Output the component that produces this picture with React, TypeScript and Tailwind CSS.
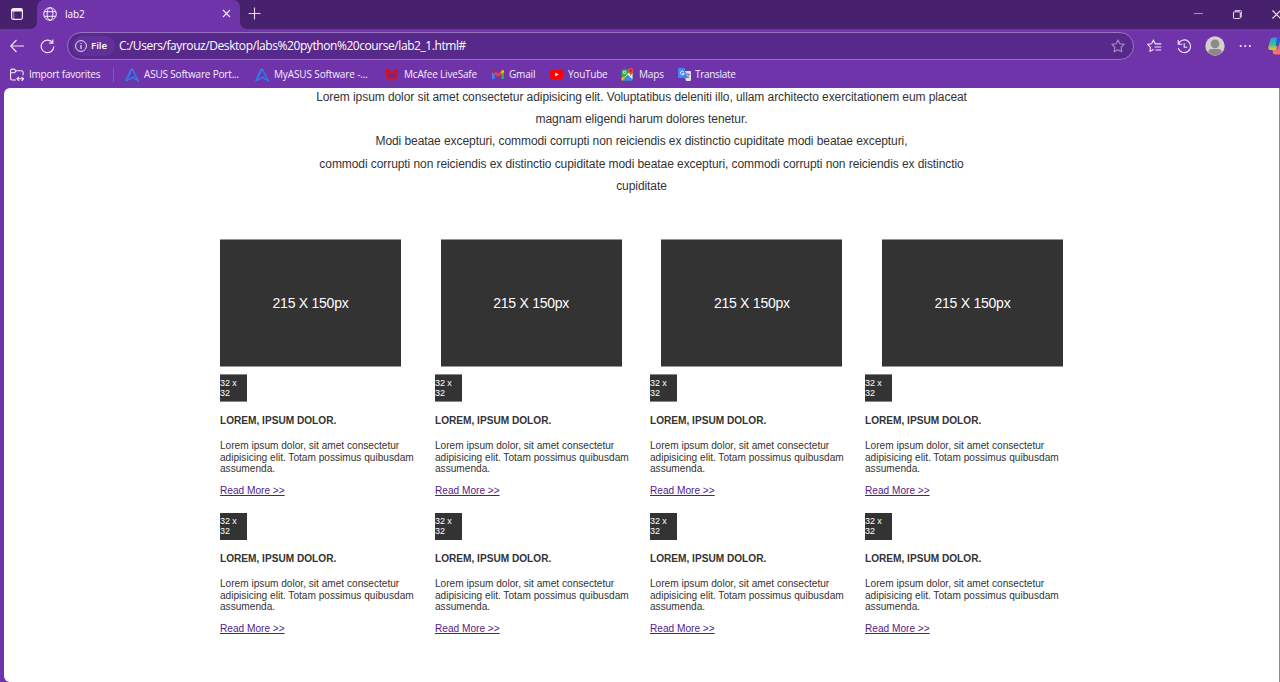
import type { ReactNode } from "react";

const intro = [
  "Lorem ipsum dolor sit amet consectetur adipisicing elit. Voluptatibus deleniti illo, ullam architecto exercitationem eum placeat",
  "magnam eligendi harum dolores tenetur.",
  "Modi beatae excepturi, commodi corrupti non reiciendis ex distinctio cupiditate modi beatae excepturi,",
  "commodi corrupti non reiciendis ex distinctio cupiditate modi beatae excepturi, commodi corrupti non reiciendis ex distinctio",
  "cupiditate",
];

function AsusIcon() {
  return (
    <svg className="h-[14px] w-[14px] shrink-0" viewBox="0 0 14 14" fill="none" stroke="#2b80ee" strokeWidth="1.5">
      <path d="M.6 12.900 6.300 1.200h1.200L13.200 12.900 8.800 10.200M6.900 1.200 3 9.600M.6 12.900 9.300 8.600" strokeWidth="1.300" />
    </svg>
  );
}

function McAfeeIcon() {
  return (
    <svg className="h-[13px] w-[12px] shrink-0" viewBox="0 0 12 13">
      <path d="M0 0l6 3 6-3v10l-6 3-6-3z" fill="#c5162e" />
      <path d="M3 4.200 6 5.800l3-1.600v4.300L6 10 3 8.500z" fill="#6b2797" />
    </svg>
  );
}

function GmailIcon() {
  return (
    <svg className="h-[9px] w-[12px] shrink-0" viewBox="0 0 12 9">
      <path d="M0 2h2.700v7H.8A.8.8 0 0 1 0 8.200z" fill="#4285f4" />
      <path d="M9.300 2H12v6.200a.8.8 0 0 1-.8.8H9.300z" fill="#34a853" />
      <path d="M2.700 1 6 3.400 9.300 1v3.300L6 6.800 2.700 4.300z" fill="#ea4335" />
      <path d="M0 2V1.200C0 0 1.300-.3 2.100.5l.6.5v3.300L0 2.200z" fill="#c5221f" />
      <path d="M12 2V1.200C12 0 10.700-.3 9.900.5l-.6.5v3.300L12 2.200z" fill="#fbbc04" />
    </svg>
  );
}

function YouTubeIcon() {
  return (
    <svg className="h-[9px] w-[13px] shrink-0" viewBox="0 0 13 9">
      <rect width="13" height="9" rx="2" fill="#f00" />
      <path d="m5.200 2.600 3.500 1.900-3.500 1.900z" fill="#fff" />
    </svg>
  );
}

function MapsIcon() {
  return (
    <svg className="h-[13px] w-[13px] shrink-0" viewBox="0 0 13 13">
      <rect x=".5" y="1.500" width="11" height="11" rx="1" fill="#34a853" />
      <path d="M.7 11.800 9.500 3l2 2v6.500L7 7z" fill="#e8eaed" />
      <path d="m2 12.500 5-5 4.500 4.600-.4.4z" fill="#4285f4" />
      <path d="m.5 10.500 2-2 1.500 1.600-2.400 2.400H.5z" fill="#fbbc04" />
      <circle cx="3.500" cy="4.300" r="1.300" fill="none" stroke="#fff" strokeWidth=".8" />
      <path d="M9.800 0a2.700 2.700 0 0 1 2.700 2.700c0 1.800-2.100 2.600-2.700 5.300C9.200 5.300 7.100 4.500 7.100 2.700A2.700 2.700 0 0 1 9.800 0z" fill="#ea4335" />
      <circle cx="9.800" cy="2.700" r=".9" fill="#811411" />
    </svg>
  );
}

function TranslateIcon() {
  return (
    <svg className="h-[13px] w-[13px] shrink-0" viewBox="0 0 13 13">
      <path d="M5 3h7a1 1 0 0 1 1 1v8a1 1 0 0 1-1 1H8z" fill="#dfe1e5" />
      <path d="M7.800 6.200h4M9.800 5.200v1M11.300 6.200c-.4 2-1.500 3-2.700 4M8.600 7.500c.6 1 1.500 2 2.500 2.500" fill="none" stroke="#5f6b7c" strokeWidth=".8" />
      <path d="M1 0h5.500l3 10H1a1 1 0 0 1-1-1V1a1 1 0 0 1 1-1z" fill="#4285f4" />
      <path d="M5.900 3.900A1.900 1.900 0 1 0 6.200 5.300H4.400" fill="none" stroke="#fff" strokeWidth=".9" />
    </svg>
  );
}

function Bookmark({ slot, icon, look, children }: { slot: string; icon: ReactNode; look: string; children: string }) {
  return (
    <a className={`flex shrink-0 items-center ${slot}`}>
      {icon}
      <span className={`whitespace-nowrap ${look}`}>{children}</span>
    </a>
  );
}

function TabStrip() {
  return (
    <div className="flex h-[29px] bg-[#47216e]">
      <div className="flex w-[37px] shrink-0 items-center bg-[#6f34aa]">
        <div className="flex h-full w-full items-center rounded-br-[7px] bg-[#47216e] pl-[11px]">
          <svg className="mb-[1px] h-[12px] w-[12px]" viewBox="0 0 12 12" fill="none" stroke="#f3edf8">
            <rect x=".6" y=".6" width="10.800" height="10.800" rx="1.800" strokeWidth="1.200" />
            <path d="M1 2.200h10" strokeWidth="2.600" />
            <path d="M2.800 3v8" strokeWidth="1" opacity=".55" />
          </svg>
        </div>
      </div>
      <div className="shrink-0 bg-[#47216e]">
        <div className="flex h-[29px] w-[203px] items-center rounded-t-[7px] bg-[#6f34aa] pb-[2px] pl-[6px] pr-[9px]">
          <svg className="h-[14px] w-[14px]" viewBox="0 0 14 14" fill="none" stroke="#f6f0fa">
            <circle cx="7" cy="7" r="6.300" />
            <ellipse cx="7" cy="7" rx="2.900" ry="6.300" />
            <path d="M1.200 4.700h11.600M1.200 9.300h11.600" />
          </svg>
          <span className="ml-[8px] text-[10px] leading-none tracking-[-0.100px] text-white">lab2</span>
          <svg className="ml-auto h-[9px] w-[9px]" viewBox="0 0 9 9" stroke="#f3edf8" strokeWidth="1.100">
            <path d="m1 1 7 7M8 1 1 8" />
          </svg>
        </div>
      </div>
      <div className="min-w-0 flex-1 overflow-hidden bg-[#6f34aa]">
        <div className="flex h-full items-center rounded-bl-[7px] bg-[#47216e] pl-[8px]">
          <svg className="mb-[2px] h-[13px] w-[13px] shrink-0" viewBox="0 0 13 13" stroke="#e7dcef" strokeWidth="1.100">
            <path d="M6.500.5v12M.5 6.500h12" />
          </svg>
          <svg className="ml-[933px] h-[9px] w-[9px] shrink-0" viewBox="0 0 9 9" stroke="#a98fc1">
            <path d="M0 3.500h9" />
          </svg>
          <svg className="ml-[30px] h-[9px] w-[9px] shrink-0" viewBox="0 0 9 9" fill="none" stroke="#eee4f5">
            <rect x=".5" y="1.800" width="6.800" height="6.800" rx=".8" />
            <path d="M2.200 1.500V.5h5.300a1 1 0 0 1 1 1v5.300h-1" strokeWidth=".8" />
          </svg>
          <svg className="ml-[30px] h-[9px] w-[9px] shrink-0" viewBox="0 0 9 9" stroke="#eee4f5" strokeWidth="1.100">
            <path d="m.5.5 8 8M8.500.5l-8 8" />
          </svg>
        </div>
      </div>
    </div>
  );
}

function Toolbar() {
  return (
    <div className="flex h-[35px] items-center overflow-hidden pb-[1px]">
      <svg className="ml-[10px] h-[14px] w-[14px] shrink-0" viewBox="0 0 14 14" fill="none" stroke="#f1e8f8" strokeWidth="1.100">
        <path d="M6.500 1 .7 7l5.800 6M.8 7H14" />
      </svg>
      <svg className="ml-[16px] h-[15px] w-[15px] shrink-0" viewBox="0 0 15 15" fill="none" stroke="#f1e8f8" strokeWidth="1.200">
        <path d="M13.800 7.500A6.300 6.300 0 1 1 12.200 3.200M12.800.5v3.700H9" />
      </svg>
      <div className="ml-[12px] flex h-[28px] w-[1067px] shrink-0 items-center rounded-full border border-[#9a73c2] bg-[#57298a] pr-[8px]">
        <div className="ml-[4px] flex h-[20px] w-[43px] items-center rounded-full bg-[#613098] pl-[3px]">
          <svg className="h-[12px] w-[12px] shrink-0" viewBox="0 0 12 12" fill="none" stroke="#e9def2">
            <circle cx="6" cy="6" r="5.400" />
            <path d="M6 5v4M6 2.900v1.200" strokeWidth="1.200" />
          </svg>
          <span className="ml-[4px] text-[9.700px] font-semibold text-white">File</span>
        </div>
        <span className="ml-[4px] whitespace-nowrap text-[12px] tracking-[-0.430px] text-white">C:/Users/fayrouz/Desktop/labs%20python%20course/lab2_1.html#</span>
        <svg className="ml-auto h-[14px] w-[14px] shrink-0" viewBox="0 0 14 14" fill="none" stroke="#ad8bcb" strokeWidth="1.100" strokeLinejoin="round">
          <path d="m7 .9 1.900 3.900 4.200.6-3 3 .7 4.300L7 10.700l-3.800 2 .7-4.300-3-3 4.200-.6z" />
        </svg>
      </div>
      <svg className="ml-[13px] h-[14px] w-[15px] shrink-0" viewBox="0 0 15 14" fill="none" stroke="#f0e5f8" strokeWidth="1.100" strokeLinejoin="round" strokeLinecap="round">
        <path d="M8.300 4.900 6.400.9 4.600 4.800.6 5.400l2.900 2.900-.7 4.200 3.600-1.900M8.500 4.900h5.300M8 8h5.800M9 11h4.800" />
      </svg>
      <svg className="ml-[15px] h-[15px] w-[15px] shrink-0" viewBox="0 0 15 15" fill="none" stroke="#f0e5f8" strokeWidth="1.100">
        <path d="M1.300 5.200A6.300 6.300 0 1 1 1.200 9M1.200 1v4.200h4.200M7.200 4.200v4.100h3" />
      </svg>
      <svg className="ml-[13px] h-[20px] w-[20px] shrink-0" viewBox="0 0 20 20">
        <circle cx="10" cy="10" r="9.700" fill="#d2d0ce" />
        <circle cx="10" cy="7.800" r="4.400" fill="#8c8987" />
        <path d="M3.300 16.400c.2-2.400 1.400-3.300 3-3.300h7.400c1.600 0 2.800.9 3 3.300a9.500 9.500 0 0 1-13.400 0z" fill="#8c8987" />
      </svg>
      <svg className="ml-[14px] h-[4px] w-[13px] shrink-0" viewBox="0 0 13 4" fill="#f5edfa">
        <circle cx="1.700" cy="2" r="1.100" />
        <circle cx="6.300" cy="2" r="1.100" />
        <circle cx="10.900" cy="2" r="1.100" />
      </svg>
      <svg className="ml-[16px] h-[18px] w-[18px] shrink-0" viewBox="0 0 18 18">
        <defs>
          <linearGradient id="pilotLeft" x1="0" y1="0" x2="0" y2="1">
            <stop offset="0" stopColor="#209be8" />
            <stop offset=".55" stopColor="#43bd91" />
            <stop offset="1" stopColor="#e7c62f" />
          </linearGradient>
          <linearGradient id="pilotRight" x1="0" y1="1" x2="1" y2="0">
            <stop offset="0" stopColor="#f8823f" />
            <stop offset=".5" stopColor="#f2609e" />
            <stop offset="1" stopColor="#a95ce8" />
          </linearGradient>
        </defs>
        <path d="M5 .5h7c1.400 0 1.700 1 2 2l.5 2H11L8.300 13H2.500C.5 13 0 11.400.4 9.700L2.300 2.900C2.700 1.500 3.500.5 5 .5z" fill="url(#pilotLeft)" />
        <path d="M8.800.5h3.300c1.300 0 1.600 1 1.900 2l.6 2h-3.500L9.500 9H7.800z" fill="#2459ce" />
        <path d="M11.700 5h3.800c2 0 2.500 1.600 2.100 3.300l-2 7c-.4 1.500-1 2.300-2.500 2.300H7c-1.400 0-1.700-.9-2-2L4.500 13h3.700c.8 0 1.200-.5 1.500-1.500z" fill="url(#pilotRight)" />
      </svg>
    </div>
  );
}

function BookmarksBar() {
  return (
    <div className="flex h-[24px] items-center pb-[3px] pl-[10px] text-[10px] text-[#f5edfb]">
      <Bookmark slot="w-[103px]" look="ml-[5px] tracking-[-0.230px]" icon={
        <svg className="h-[14px] w-[14px] shrink-0" viewBox="0 0 14 14" fill="none" stroke="#f3eaf9" strokeWidth="1.100">
          <path d="M6 12H2A1.400 1.400 0 0 1 .6 10.600V2.500A1.400 1.400 0 0 1 2 1.100h2.300l1.700 1.700h5.700a1.400 1.400 0 0 1 1.400 1.400v3M.6 4.700h4L6 2.800M7 10.800h6.500M9 8.800l-2 2 2 2M11.600 8.800l2 2-2 2" />
        </svg>
      }>Import favorites</Bookmark>
      <div className="mr-[11px] h-[14px] w-px bg-[#8757b5]" />
      <Bookmark slot="w-[130px]" look="ml-[5px] tracking-[-0.180px]" icon={<AsusIcon />}>ASUS Software Port...</Bookmark>
      <Bookmark slot="w-[131px]" look="ml-[5px] tracking-[-0.130px]" icon={<AsusIcon />}>MyASUS Software -...</Bookmark>
      <Bookmark slot="w-[106px]" look="ml-[6px] tracking-[-0.180px]" icon={<McAfeeIcon />}>McAfee LiveSafe</Bookmark>
      <Bookmark slot="w-[58px]" look="ml-[5px] tracking-[-0.180px]" icon={<GmailIcon />}>Gmail</Bookmark>
      <Bookmark slot="w-[71px]" look="ml-[5px] tracking-[-0.230px]" icon={<YouTubeIcon />}>YouTube</Bookmark>
      <Bookmark slot="w-[57px]" look="ml-[5px] tracking-[-0.180px]" icon={<MapsIcon />}>Maps</Bookmark>
      <Bookmark slot="w-[70px]" look="ml-[4px] tracking-[-0.300px]" icon={<TranslateIcon />}>Translate</Bookmark>
    </div>
  );
}

function ServiceCard({ badge }: { badge: string }) {
  return (
    <article className="h-[138px] w-[215px]">
      <div className={`w-[27px] bg-[#333] text-[9px] leading-[10px] tracking-[-0.100px] text-white ${badge}`}>32 x<br />32</div>
      <h3 className="mt-[13px] text-[10.120px] leading-[12px] font-bold">LOREM, IPSUM DOLOR.</h3>
      <p className="mt-[13px] w-[200px] text-[10.120px] leading-[11.500px]">
        Lorem ipsum dolor, sit amet consectetur<br />adipisicing elit. Totam possimus quibusdam<br />assumenda.
      </p>
      <a href="#" className="mt-[10px] block w-fit text-[10.120px] leading-[12px] text-[#551a8b] underline">Read More &gt;&gt;</a>
    </article>
  );
}

export default function App() {
  return (
    <div className="flex h-[682px] w-[1280px] flex-col overflow-hidden bg-[#6f34aa] font-['Open_Sans','Noto_Sans',sans-serif]">
      <TabStrip />
      <Toolbar />
      <BookmarksBar />
      <main className="ml-[4px] flex min-h-0 flex-1 flex-col overflow-hidden rounded-l-[6px] border-r border-[#8b8b8b] bg-white pl-[216px] font-['Liberation_Sans',Arial,sans-serif] text-[#333]">
        <section className="-mt-[2.400px] h-[111.400px] w-[843px] shrink-0 text-center text-[12px] leading-[22.300px] tracking-[-0.075px]">
          {intro.map((line) => (
            <p key={line} className="whitespace-nowrap">{line}</p>
          ))}
        </section>
        <section className="mt-[42px] flex w-[843px] justify-between">
          {[0, 1, 2, 3].map((item) => (
            <div key={item} className="flex h-[128px] w-[181px] items-center justify-center border-y border-[#969696] bg-[#333] text-[14px] tracking-[-0.250px] text-white">215 X 150px</div>
          ))}
        </section>
        <section className="mt-[7px] grid w-[860px] grid-cols-4 gap-y-px">
          {[0, 1, 2, 3].map((item) => <ServiceCard key={item} badge="h-[28px] border-y border-[#858585] pt-[3px]" />)}
          {[4, 5, 6, 7].map((item) => <ServiceCard key={item} badge="h-[27px] pt-[3px]" />)}
        </section>
      </main>
    </div>
  );
}
